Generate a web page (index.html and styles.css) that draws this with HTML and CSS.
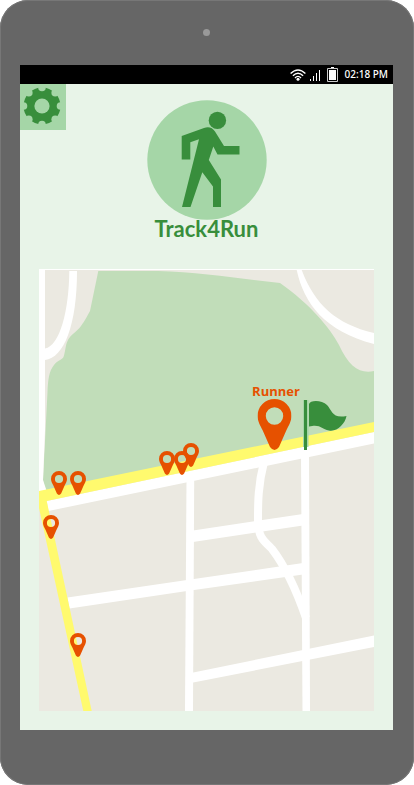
FILE: index.html
```html
<!DOCTYPE html>
<html lang="en">
<head>
  <meta charset="utf-8">
  <meta name="viewport" content="width=device-width, initial-scale=1">
  <title>Track4Run</title>
  <link rel="stylesheet" href="styles.css">
</head>
<body>
  <div class="device">
    <div class="bezel"><span class="camera"></span></div>
    <div class="screen">
      <header class="status-bar">
        <svg class="wifi" viewBox="0 0 16 12" width="16" height="12" aria-hidden="true">
          <g fill="none" stroke="#fff" stroke-width="1.4">
            <path d="M.6 4.6Q8-2.6 15.4 4.6"/>
            <path d="M2.9 6.8Q8 1.8 13.1 6.8"/>
            <path d="M5 9Q8 5.8 11 9"/>
          </g>
          <circle cx="8" cy="10.3" r="1.5" fill="#fff"/>
        </svg>
        <svg class="signal" viewBox="0 0 11 12" width="11" height="12" aria-hidden="true">
          <path d="M0 10h1v2H0zM3 7h1v5H3zM6 4h1v8H6zM9 1h1v11H9z" fill="#fff"/>
        </svg>
        <svg class="battery" viewBox="0 0 11 15" width="11" height="15" aria-hidden="true">
          <path d="M4 0h3v2H4z" fill="#fff"/>
          <path d="M.5 1.5h10v13H.5z" fill="none" stroke="#ccc"/>
          <path d="M2 3h7v10H2z" fill="#fff"/>
        </svg>
        <time class="clock">02:18 PM</time>
      </header>
      <main class="app">
        <div class="top">
          <button class="settings" type="button" aria-label="Settings">
            <svg viewBox="0 0 46 46" width="46" height="46" aria-hidden="true">
              <circle cx="22" cy="22" r="18.500" fill="#388e3c"/>
              <g fill="#a5d6a7">
                <circle cx="22" cy="22" r="7.6"/>
                <circle cx="22" cy="3.5" r="3.8"/>
                <circle cx="35.2" cy="8.8" r="3.8"/>
                <circle cx="40.5" cy="22" r="3.8"/>
                <circle cx="35.2" cy="35.2" r="3.8"/>
                <circle cx="22" cy="40.5" r="3.8"/>
                <circle cx="8.8" cy="35.2" r="3.8"/>
                <circle cx="3.5" cy="22" r="3.8"/>
                <circle cx="8.8" cy="8.8" r="3.8"/>
              </g>
            </svg>
          </button>
          <div class="brand">
            <svg viewBox="147 100 120 120" width="120" height="120" aria-hidden="true">
              <circle cx="207" cy="160" r="59.7" fill="#a5d6a7"/>
              <g fill="#388e3c">
                <circle cx="217.4" cy="120.4" r="8.7"/>
                <path d="M181.7 136 204 128Q211 125.500 215 131.500L224 146H239.500V154.500H217.500L213.300 146.500 208.800 160 221 179.500V207H213V186.500L202.300 172.300 190.500 207H182L199 139.300 190.300 142.300V159.500H181.700Z"/>
              </g>
            </svg>
            <h1 class="title">Track4Run</h1>
          </div>
        </div>
        <svg class="map" viewBox="39 269 335 442" role="img" aria-label="Map of the run">
          <defs>
            <symbol id="pin" viewBox="0 0 34 51">
              <path fill="#e65100" fill-rule="evenodd" d="M17 0A17 17 0 0 1 34 17C34 22 31 27 29 31L21.500 48Q17 54 12.500 48L5 31C3 27 0 22 0 17A17 17 0 0 1 17 0ZM17 8.300A8.700 8.700 0 1 0 17 25.700A8.700 8.700 0 1 0 17 8.300Z"/>
            </symbol>
          </defs>
          <path fill="#ebe9e1" d="M39 269H374V711H39Z"/>
          <path fill="#c1ddb9" d="M98.300 271H158C200 272 240 279 280 283C310 304 330 328 339 345C349 367 360 374 374 371V430L46 498 43 480 47.500 392C48 380 49 371 54 365C58 360 62 360 63.500 357C66 350 65 343 70 337C78 329 80 330 90 311Z"/>
          <g fill="#fff">
            <path d="M39 269H374V270H45V430L43 480 47 492H39Z"/>
            <path d="M69.300 271C69 310 60 346 45 348.500V360C64 358 77 325 77 271Z"/>
            <path d="M296.700 270C304 304 325 331 374 344V333C336 324 315 305 301.700 270Z"/>
            <path d="M46.700 501 374 432V443.500L48.500 511Z"/>
            <path d="M186.500 480H194.200L193 711H185Z"/>
            <path d="M301 450H309L310 711H302.500Z"/>
            <path d="M193 530.500 303 514V525.500L193 542Z"/>
            <path d="M67.500 597.500 187 580 303 563V574.500L187 591 69.500 608.500Z"/>
            <path d="M192 672.800 374 635.500V647L192 682.700Z"/>
          </g>
          <path fill="none" stroke="#fff" stroke-width="8" d="M264 462C258 485 258 503 258 520C258 540 266 542 272 549C285 566 295 586 306 618"/>
          <path fill="#fffa6e" d="M39 491 374 422V432L46.700 501 91.700 711H83.300L39 508Z"/>
          <path fill="#a5d6a7" d="M303 400H308.500V447H303Z"/>
          <path fill="#388e3c" d="M304 400H307V450H304Z"/>
          <path fill="#388e3c" d="M309 404C310 400 322 400 327 405C332 410 332 419 346.500 416C345 424 337 432 329 430.500C321 429 321 424 309 426.500Z"/>
          <use href="#pin" x="51" y="471" width="16" height="24"/>
          <use href="#pin" x="70" y="471" width="16" height="24"/>
          <use href="#pin" x="183" y="443" width="16" height="24"/>
          <use href="#pin" x="159" y="451" width="16" height="24"/>
          <use href="#pin" x="174" y="451" width="16" height="24"/>
          <use href="#pin" x="43" y="515" width="16" height="24"/>
          <use href="#pin" x="70" y="633" width="16" height="24"/>
          <use href="#pin" x="257.500" y="399" width="34" height="51"/>
          <text class="runner" x="276" y="396" text-anchor="middle">Runner</text>
        </svg>
      </main>
    </div>
  </div>
</body>
</html>
```
FILE: styles.css
```css
* {
  box-sizing: border-box;
}

body {
  margin: 0;
  background: #fff;
  font-family: "Open Sans", "Noto Sans", sans-serif;
}

.device {
  display: flex;
  flex-direction: column;
  min-height: 100vh;
  padding: 0 21px 55px 20px;
  border-radius: 28px;
  background: #666;
  box-shadow: inset 0 0 0 1px #777;
}

.bezel {
  display: flex;
  align-items: center;
  justify-content: center;
  height: 65px;
}

.camera {
  width: 7px;
  height: 7px;
  border-radius: 50%;
  background: #999;
}

.screen {
  flex: 1;
  background: #e8f4e8;
}

.status-bar {
  display: flex;
  align-items: center;
  justify-content: flex-end;
  height: 19px;
  padding-right: 5px;
  background: #000;
  color: #fff;
}

.signal {
  margin-left: 4px;
}

.battery {
  margin-left: 6px;
}

.clock {
  margin-left: 7px;
  font-family: "Noto Sans", sans-serif;
  font-size: 10px;
  font-weight: 500;
  line-height: 19px;
}

.top {
  display: grid;
  grid-template-columns: 46px 1fr 46px;
  align-items: start;
}

.settings {
  width: 46px;
  height: 46px;
  padding: 0;
  border: 0;
  background: #a5d6a7;
  cursor: pointer;
}

.settings svg,
.brand svg,
.map {
  display: block;
}

.brand {
  display: flex;
  flex-direction: column;
  align-items: center;
  padding-top: 16px;
}

.title {
  margin: -5px 0 0;
  color: #388e3c;
  font-family: Lato, sans-serif;
  font-size: 22px;
  font-weight: 700;
  line-height: 28px;
}

.map {
  width: calc(100% - 38px);
  height: auto;
  margin: 26px 19px 19px;
}

.runner {
  fill: #e65100;
  font-size: 13px;
  font-weight: 700;
}
```
